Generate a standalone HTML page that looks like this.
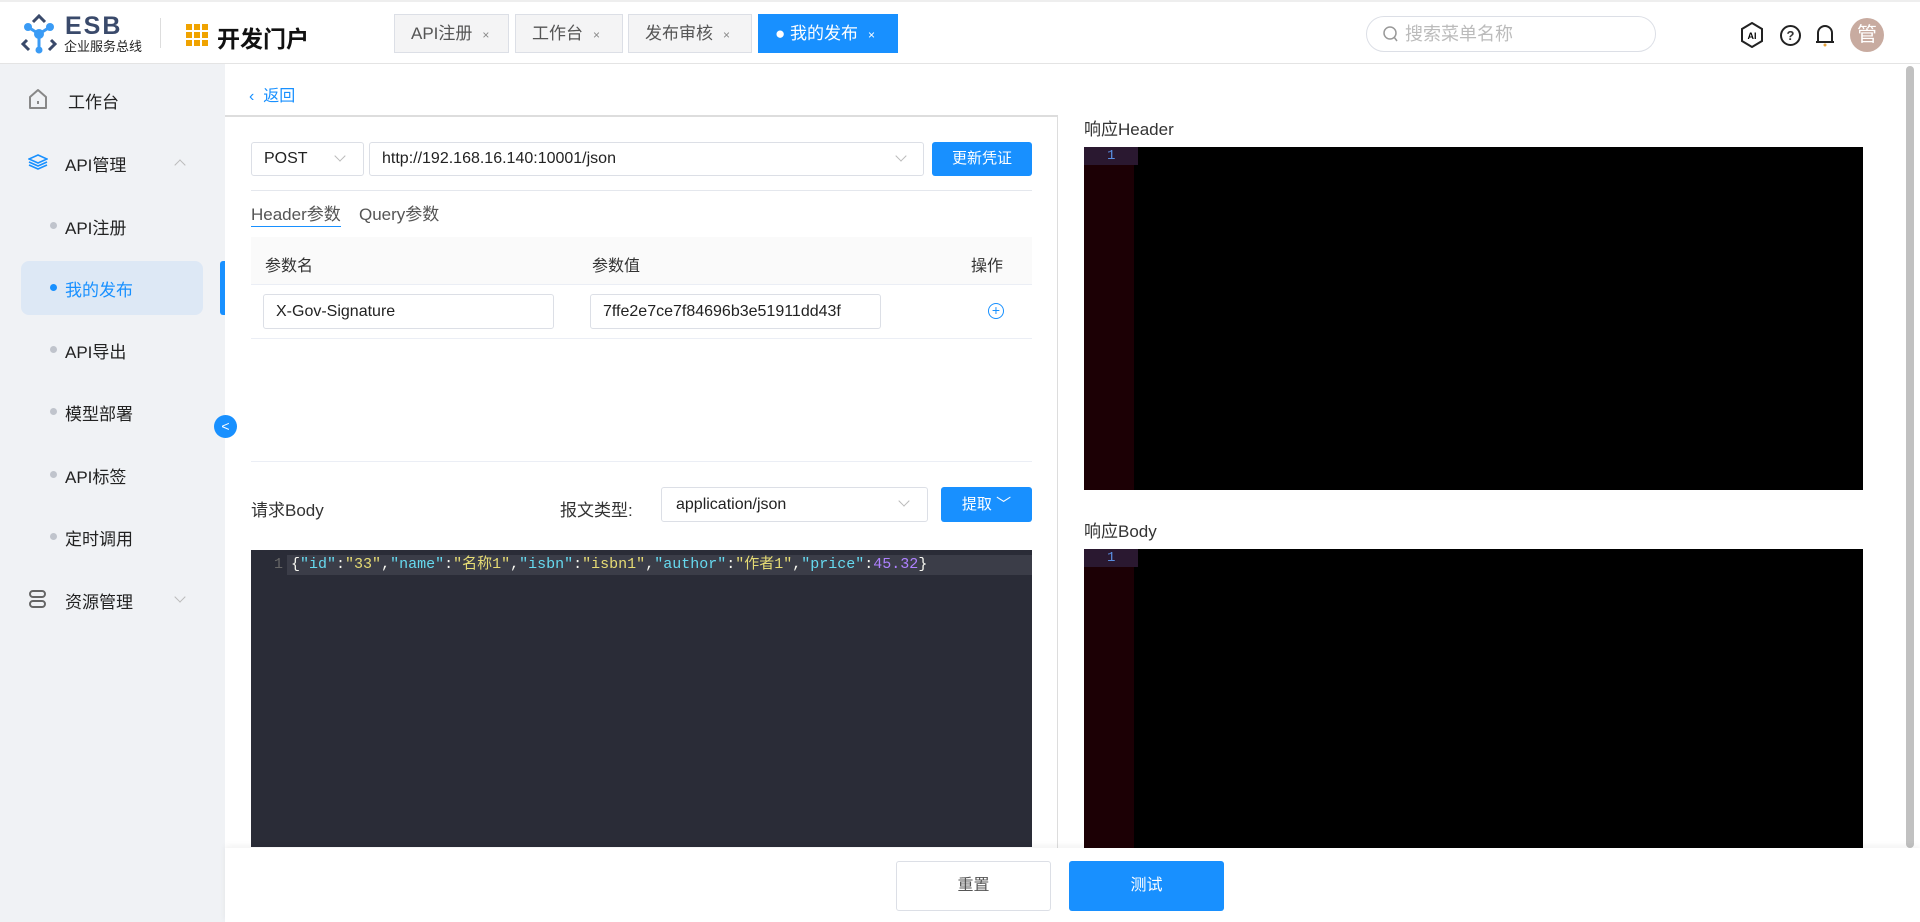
<!DOCTYPE html>
<html><head><meta charset="utf-8">
<style>
*{margin:0;padding:0;box-sizing:border-box}
body{width:1920px;height:922px;overflow:hidden;background:#fff;font-family:"Liberation Sans","Noto Sans CJK SC",sans-serif;color:#333;position:relative}
.abs{position:absolute}
.hdr{left:0;top:0;width:1920px;height:64px;background:#fff;border-bottom:1px solid #e4e4e4;border-top:2px solid #eee}
.tab{position:absolute;top:12px;height:39px;border:1px solid #dcdfe6;background:#f4f4f5;color:#555;font-size:17px;line-height:37px;padding-left:16px}
.tab i{font-style:normal;font-size:12px;color:#888;margin-left:10px}
.side{left:0;top:64px;width:225px;height:858px;background:#f0f2f5}
.si{position:absolute;left:0;font-size:17px;color:#222}
.dot{position:absolute;left:50px;width:7px;height:7px;border-radius:50%;background:#c0c4cc}
.inp{position:absolute;border:1px solid #dcdfe6;border-radius:3px;background:#fff;font-size:16px;color:#222;padding-left:12px}
.btn{position:absolute;background:#1890ff;color:#fff;font-size:15px;text-align:center;border-radius:3px}
.chev{position:absolute;width:8px;height:8px;border-right:1px solid #bbb;border-bottom:1px solid #bbb;transform:rotate(45deg)}
</style></head><body>
<div class="abs hdr">
 <svg class="abs" style="left:21px;top:12px" width="36" height="40" viewBox="0 0 36 40">
  <path d="M12 8 L18 2 L24 8" stroke="#3a4a6b" stroke-width="3" fill="none"/>
  <path d="M6 26 L2 30 L8 36" stroke="#3a4a6b" stroke-width="3" fill="none"/>
  <path d="M30 26 L34 30 L28 36" stroke="#3a4a6b" stroke-width="3" fill="none"/>
  <line x1="7" y1="13" x2="18" y2="20" stroke="#3a9bf5" stroke-width="3"/><line x1="29" y1="13" x2="18" y2="20" stroke="#3a9bf5" stroke-width="3"/><line x1="18" y1="20" x2="18" y2="34" stroke="#3a9bf5" stroke-width="3"/>
  <circle cx="7" cy="13" r="4" fill="#3a9bf5"/><circle cx="29" cy="13" r="4" fill="#3a9bf5"/><circle cx="18" cy="20" r="5" fill="#3a9bf5"/><circle cx="18" cy="36" r="3.5" fill="#3a9bf5"/>
 </svg>
 <div class="abs" style="left:65px;top:10px;font-size:25px;font-weight:bold;color:#3a4a6b;letter-spacing:2px">ESB</div>
 <div class="abs" style="left:64px;top:34px;font-size:13px;color:#222">企业服务总线</div>
 <div class="abs" style="left:160px;top:16px;width:1px;height:30px;background:#ddd"></div>
 <div class="abs" style="left:186px;top:22px;width:22px;height:22px;background:repeating-linear-gradient(90deg,#f0a300 0 6px,#fff 6px 8px)"></div>
 <div class="abs" style="left:186px;top:22px;width:22px;height:22px;background:repeating-linear-gradient(0deg,transparent 0 6px,#fff 6px 8px)"></div>
 <div class="abs" style="left:217px;top:18px;font-size:23px;font-weight:bold;color:#111">开发门户</div>
 <div class="tab" style="left:394px;width:115px">API注册<i>×</i></div>
 <div class="tab" style="left:515px;width:108px">工作台<i>×</i></div>
 <div class="tab" style="left:628px;width:124px">发布审核<i>×</i></div>
 <div class="tab" style="left:758px;width:140px;background:#1890ff;border-color:#1890ff;color:#fff">● 我的发布<i style="color:#fff">×</i></div>
 <div class="abs" style="left:1366px;top:14px;width:290px;height:36px;border:1px solid #dcdfe6;border-radius:18px;font-size:18px;color:#bbb;line-height:34px;padding-left:38px">搜索菜单名称</div>
 <svg class="abs" style="left:1383px;top:24px" width="16" height="17" viewBox="0 0 16 17"><circle cx="7" cy="7" r="6" stroke="#999" stroke-width="1.5" fill="none"/><line x1="11" y1="11" x2="14" y2="15" stroke="#999" stroke-width="1.5"/></svg>
 <svg class="abs" style="left:1740px;top:20px" width="24" height="26" viewBox="0 0 24 26"><path d="M12 1L22 7V19L12 25 2 19V7Z" stroke="#222" stroke-width="2" fill="none"/><text x="12" y="17" font-size="9" font-weight="bold" text-anchor="middle" font-family="Liberation Sans">AI</text></svg>
 <div class="abs" style="left:1780px;top:23px;width:21px;height:21px;border:2px solid #222;border-radius:50%;font-size:13px;font-weight:bold;text-align:center;line-height:17px">?</div>
 <svg class="abs" style="left:1815px;top:21px" width="20" height="24" viewBox="0 0 20 24"><path d="M3 19V10A7 7 0 0 1 17 10V19Z M1 19H19" stroke="#222" stroke-width="2" fill="none"/><circle cx="10" cy="22" r="1.5" fill="#e6a23c"/></svg>
 <div class="abs" style="left:1850px;top:16px;width:34px;height:34px;border-radius:50%;background:#c8aba0;color:#fff;font-size:20px;text-align:center;line-height:34px">管</div>
</div>
<div class="abs side">
 <svg class="abs" style="left:28px;top:24px" width="20" height="22" viewBox="0 0 20 22"><path d="M2 9L10 2 18 9V20H2Z" stroke="#888" stroke-width="2" fill="none" stroke-linejoin="round"/><line x1="10" y1="13" x2="10" y2="16" stroke="#888" stroke-width="2"/></svg>
 <div class="si" style="left:68px;top:24px">工作台</div>
 <svg class="abs" style="left:28px;top:90px" width="20" height="16" viewBox="0 0 20 16"><path d="M10 1L19 5 10 9 1 5Z M1 8L10 12 19 8 M1 11L10 15 19 11" stroke="#1890ff" stroke-width="1.6" fill="none"/></svg>
 <div class="si" style="left:65px;top:87px">API管理</div>
 <div class="chev" style="left:176px;top:97px;transform:rotate(225deg)"></div>
 <div class="dot" style="top:158px"></div><div class="si" style="left:65px;top:150px">API注册</div>
 <div class="abs" style="left:21px;top:197px;width:182px;height:54px;background:#dde8f5;border-radius:8px"></div>
 <div class="abs" style="left:220px;top:197px;width:5px;height:54px;background:#1890ff;border-radius:3px 0 0 3px"></div>
 <div class="dot" style="top:220px;background:#1890ff"></div><div class="si" style="left:65px;top:212px;color:#1890ff">我的发布</div>
 <div class="dot" style="top:282px"></div><div class="si" style="left:65px;top:274px">API导出</div>
 <div class="dot" style="top:344px"></div><div class="si" style="left:65px;top:336px">模型部署</div>
 <div class="dot" style="top:407px"></div><div class="si" style="left:65px;top:399px">API标签</div>
 <div class="dot" style="top:469px"></div><div class="si" style="left:65px;top:461px">定时调用</div>
 <div class="abs" style="left:29px;top:526px;width:17px;height:8px;border:2px solid #666;border-radius:4px"></div>
 <div class="abs" style="left:29px;top:536px;width:17px;height:8px;border:2px solid #666;border-radius:4px"></div>
 <div class="si" style="left:65px;top:524px">资源管理</div>
 <div class="chev" style="left:176px;top:529px"></div>
</div>
<div class="abs" style="left:214px;top:415px;width:23px;height:23px;border-radius:50%;background:#1890ff;color:#fff;font-size:14px;text-align:center;line-height:22px">&lt;</div>
<div class="abs" style="left:249px;top:82px;font-size:16px;color:#1890ff">‹&nbsp;&nbsp;返回</div>
<div class="abs" style="left:225px;top:115px;width:833px;height:735px;border-top:2px solid #ddd;border-right:1px solid #ddd"></div>
<div class="inp" style="left:251px;top:142px;width:113px;height:34px;line-height:32px">POST</div><div class="chev" style="left:336px;top:152px"></div>
<div class="inp" style="left:369px;top:142px;width:555px;height:34px;line-height:32px">http://192.168.16.140:10001/json</div><div class="chev" style="left:897px;top:152px"></div>
<div class="btn" style="left:932px;top:142px;width:100px;height:34px;line-height:34px">更新凭证</div>
<div class="abs" style="left:251px;top:190px;width:781px;height:1px;background:#e4e7ed"></div>
<div class="abs" style="left:251px;top:204px;font-size:17px;color:#555;border-bottom:1px solid #1890ff;line-height:22px">Header参数</div>
<div class="abs" style="left:359px;top:204px;font-size:17px;color:#555;line-height:22px">Query参数</div>
<div class="abs" style="left:251px;top:237px;width:781px;height:48px;background:#fafafa;border-bottom:1px solid #ebeef5"></div>
<div class="abs" style="left:265px;top:252px;font-size:16px">参数名</div>
<div class="abs" style="left:592px;top:252px;font-size:16px">参数值</div>
<div class="abs" style="left:971px;top:252px;font-size:16px">操作</div>
<div class="inp" style="left:263px;top:294px;width:291px;height:35px;line-height:33px">X-Gov-Signature</div>
<div class="inp" style="left:590px;top:294px;width:291px;height:35px;line-height:33px;overflow:hidden;white-space:nowrap">7ffe2e7ce7f84696b3e51911dd43f</div>
<div class="abs" style="left:988px;top:303px;width:16px;height:16px;border:1px solid #1890ff;border-radius:50%;color:#1890ff;font-size:14px;line-height:13px;text-align:center">+</div>
<div class="abs" style="left:251px;top:338px;width:781px;height:1px;background:#ebeef5"></div>
<div class="abs" style="left:251px;top:461px;width:781px;height:1px;background:#ebeef5"></div>
<div class="abs" style="left:251px;top:496px;font-size:17px">请求Body</div>
<div class="abs" style="left:560px;top:496px;font-size:17px">报文类型:</div>
<div class="inp" style="left:661px;top:487px;width:267px;height:35px;line-height:33px;padding-left:14px">application/json</div><div class="chev" style="left:900px;top:497px"></div>
<div class="btn" style="left:941px;top:487px;width:91px;height:35px;line-height:35px">提取 ﹀</div>
<div class="abs" style="left:251px;top:550px;width:781px;height:297px;background:#2a2c37"></div>
<div class="abs" style="left:287px;top:555px;width:745px;height:20px;background:#3b3d48"></div>
<div class="abs" style="left:274px;top:556px;font-family:'Liberation Mono','Noto Sans CJK SC',monospace;font-size:15px;color:#666">1</div>
<div class="abs" style="left:291px;top:555px;font-family:'Liberation Mono','Noto Sans CJK SC',monospace;font-size:15px;line-height:20px;color:#f8f8f2;white-space:pre">{<span style="color:#66d9ef">"id"</span>:<span style="color:#e6db74">"33"</span>,<span style="color:#66d9ef">"name"</span>:<span style="color:#e6db74">"名称1"</span>,<span style="color:#66d9ef">"isbn"</span>:<span style="color:#e6db74">"isbn1"</span>,<span style="color:#66d9ef">"author"</span>:<span style="color:#e6db74">"作者1"</span>,<span style="color:#66d9ef">"price"</span>:<span style="color:#ae81ff">45.32</span>}</div>
<div class="abs" style="left:1084px;top:115px;font-size:17px">响应Header</div>
<div class="abs" style="left:1084px;top:147px;width:779px;height:343px;background:#000"></div>
<div class="abs" style="left:1084px;top:147px;width:50px;height:343px;background:#1c0005"></div>
<div class="abs" style="left:1084px;top:147px;width:54px;height:18px;background:#2a1830"></div>
<div class="abs" style="left:1107px;top:148px;font-size:14px;color:#5a8ee0;font-family:'Liberation Mono',monospace">1</div>
<div class="abs" style="left:1084px;top:517px;font-size:17px">响应Body</div>
<div class="abs" style="left:1084px;top:549px;width:779px;height:300px;background:#000"></div>
<div class="abs" style="left:1084px;top:549px;width:50px;height:300px;background:#1c0005"></div>
<div class="abs" style="left:1084px;top:549px;width:54px;height:18px;background:#2a1830"></div>
<div class="abs" style="left:1107px;top:550px;font-size:14px;color:#5a8ee0;font-family:'Liberation Mono',monospace">1</div>
<div class="abs" style="left:1906px;top:66px;width:8px;height:782px;background:#c1c1c1;border-radius:4px"></div>
<div class="abs" style="left:225px;top:848px;width:1695px;height:74px;background:#fff;box-shadow:0 -2px 6px rgba(0,0,0,0.06)"></div>
<div class="abs" style="left:896px;top:861px;width:155px;height:50px;border:1px solid #dcdfe6;border-radius:3px;font-size:16px;color:#555;text-align:center;line-height:48px">重置</div>
<div class="btn" style="left:1069px;top:861px;width:155px;height:50px;line-height:50px;font-size:16px">测试</div>
</body></html>
